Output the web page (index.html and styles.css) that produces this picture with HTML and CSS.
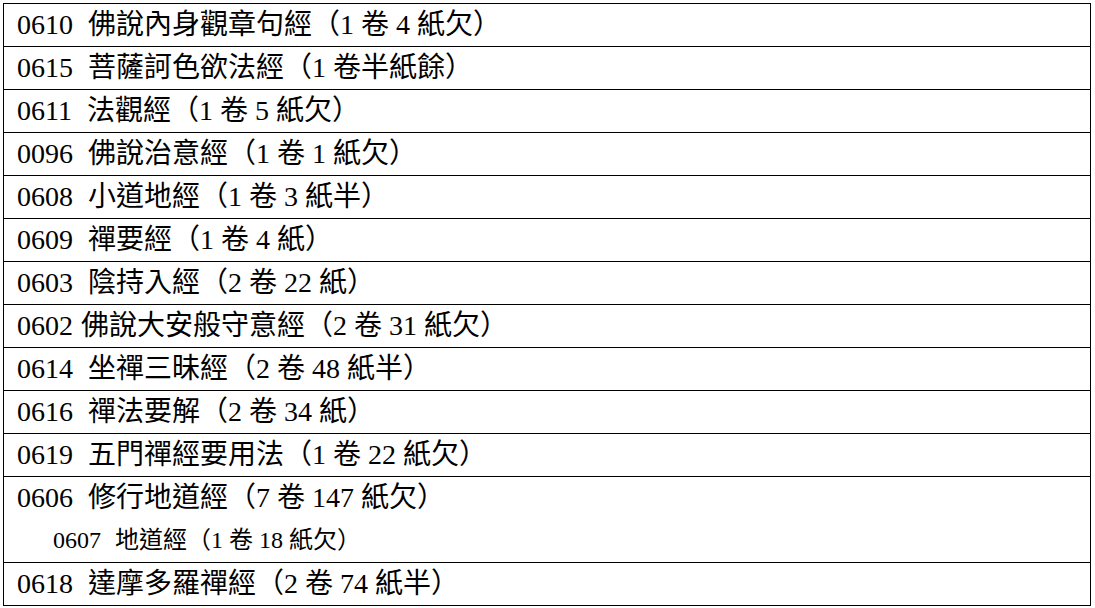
FILE: index.html
```html
<!DOCTYPE html>
<html lang="zh-Hant">
<head>
<meta charset="utf-8">
<title>經目</title>
<link rel="stylesheet" href="styles.css">
</head>
<body>
<div class="list">
  <div class="row"><span class="line"><span class="no">0610 </span>佛說內身觀章句經（1 卷 4 紙欠）</span></div>
  <div class="row"><span class="line"><span class="no">0615 </span>菩薩訶色欲法經（1 卷半紙餘）</span></div>
  <div class="row"><span class="line"><span class="no">0611 </span>法觀經（1 卷 5 紙欠）</span></div>
  <div class="row"><span class="line"><span class="no">0096 </span>佛說治意經（1 卷 1 紙欠）</span></div>
  <div class="row"><span class="line"><span class="no">0608 </span>小道地經（1 卷 3 紙半）</span></div>
  <div class="row"><span class="line"><span class="no">0609 </span>禪要經（1 卷 4 紙）</span></div>
  <div class="row"><span class="line"><span class="no">0603 </span>陰持入經（2 卷 22 紙）</span></div>
  <div class="row"><span class="line"><span class="no">0602</span>佛說大安般守意經（2 卷 31 紙欠）</span></div>
  <div class="row"><span class="line"><span class="no">0614 </span>坐禪三昧經（2 卷 48 紙半）</span></div>
  <div class="row"><span class="line"><span class="no">0616 </span>禪法要解（2 卷 34 紙）</span></div>
  <div class="row"><span class="line"><span class="no">0619 </span>五門禪經要用法（1 卷 22 紙欠）</span></div>
  <div class="row double">
    <span class="line"><span class="no">0606 </span>修行地道經（7 卷 147 紙欠）</span>
    <span class="line sub"><span class="no">0607 </span>地道經（1 卷 18 紙欠）</span>
  </div>
  <div class="row"><span class="line"><span class="no">0618 </span>達摩多羅禪經（2 卷 74 紙半）</span></div>
</div>
</body>
</html>
```

FILE: styles.css
```css
html, body {
  margin: 0;
  padding: 0;
  background: #ffffff;
}
body {
  padding: 3px 0 0 3px;
  font-family: "Liberation Serif", "Noto Sans CJK TC", serif;
  color: #000000;
}
.list {
  width: 1088px;
  box-sizing: border-box;
  border: 1px solid #000000;
  border-bottom: none;
}
.row {
  display: flex;
  flex-direction: column;
  border-bottom: 1px solid #000000;
}
.line {
  display: flex;
  align-items: center;
  height: 42px;
  padding-left: 13px;
  font-size: 28px;
  line-height: 1;
  white-space: pre;
}
.no {
  margin-right: 8px;
}
.double .line.sub {
  height: 41px;
  padding-bottom: 2px;
  padding-left: 49px;
  font-size: 24px;
}
```
